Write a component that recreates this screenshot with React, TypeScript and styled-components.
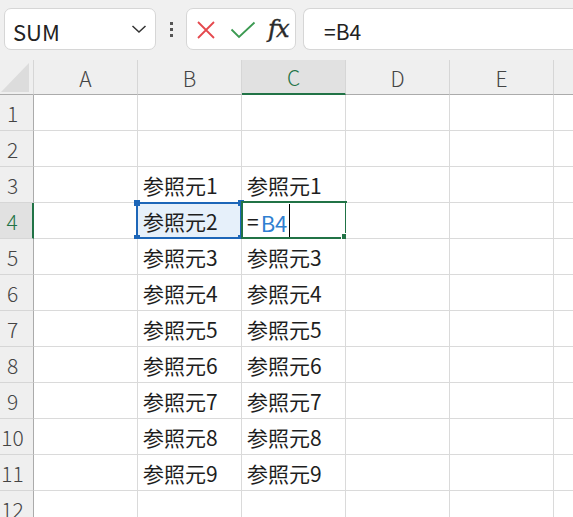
import React from 'react';
import styled, { createGlobalStyle, css } from 'styled-components';

const GlobalStyle = createGlobalStyle`
  html, body {
    margin: 0;
    padding: 0;
    background: #ffffff;
  }
  body {
    font-family: 'Noto Sans CJK JP', 'Noto Sans', sans-serif;
    overflow: hidden;
  }
`;

const COLUMNS = ['A', 'B', 'C', 'D', 'E', 'F'];
const ROWS = Array.from({ length: 12 }, (_, i) => i + 1);
const SELECTED_COL = 'C';
const SELECTED_ROW = 4;

// 参照元1..9 in B3:C11
function cellText(col: string, row: number): string {
  if ((col === 'B' || col === 'C') && row >= 3 && row <= 11) {
    return `参照元${row - 2}`;
  }
  return '';
}

export default function App(): React.ReactElement {
  return (
    <>
      <GlobalStyle />
      <Page>
        <Toolbar>
          <NameBox>
            <NameText>SUM</NameText>
            <svg width="16" height="10" viewBox="0 0 16 10">
              <path d="M1.5 2 L8 8 L14.5 2" fill="none" stroke="#333" strokeWidth="1.5" />
            </svg>
          </NameBox>
          <Grip>
            <Dot />
            <Dot />
            <Dot />
          </Grip>
          <FxGroup>
            <svg width="20" height="20" viewBox="0 0 20 20">
              <path d="M2 2 L18 18 M18 2 L2 18" stroke="#e5484d" strokeWidth="1.8" fill="none" />
            </svg>
            <svg width="26" height="18" viewBox="0 0 26 18">
              <path d="M1.5 8.5 L9 16 L24.5 1.5" stroke="#3c9a52" strokeWidth="1.8" fill="none" />
            </svg>
            <FxLabel>fx</FxLabel>
          </FxGroup>
          <FormulaInput>=B4</FormulaInput>
        </Toolbar>

        <Sheet>
          <Corner>
            <svg width="29" height="29" viewBox="0 0 29 29">
              <polygon points="28,0 28,29 0,29" fill="#dcdcdc" />
            </svg>
          </Corner>
          {COLUMNS.map((c) => (
            <ColHeader key={c} $active={c === SELECTED_COL}>
              {c === 'F' ? '' : c}
            </ColHeader>
          ))}
          {ROWS.map((r) => (
            <React.Fragment key={r}>
              <RowHeader $active={r === SELECTED_ROW}>{r}</RowHeader>
              {COLUMNS.map((c) => {
                if (c === 'B' && r === 4) {
                  return (
                    <Cell key={c} $ref>
                      {cellText(c, r)}
                      <RefFrame>
                        <Handle $pos="tl" />
                        <Handle $pos="tr" />
                        <Handle $pos="bl" />
                        <Handle $pos="br" />
                      </RefFrame>
                    </Cell>
                  );
                }
                if (c === 'C' && r === 4) {
                  return (
                    <Cell key={c}>
                      <Equals>=</Equals>
                      <RefText>B4</RefText>
                      <Caret />
                      <EditFrame>
                        <FillHandle />
                      </EditFrame>
                    </Cell>
                  );
                }
                return <Cell key={c}>{cellText(c, r)}</Cell>;
              })}
            </React.Fragment>
          ))}
        </Sheet>
      </Page>
    </>
  );
}

const Page = styled.div`
  width: 573px;
  height: 517px;
  overflow: hidden;
  display: flex;
  flex-direction: column;
  background: #ffffff;
`;

const Toolbar = styled.div`
  height: 60px;
  flex: none;
  display: flex;
  align-items: flex-start;
  padding: 8px 0 0 4px;
  box-sizing: border-box;
  background: #f0f0f0;
`;

const NameBox = styled.div`
  flex: none;
  width: 152px;
  height: 42px;
  box-sizing: border-box;
  display: flex;
  align-items: center;
  justify-content: space-between;
  padding: 0 8px 0 8px;
  background: #ffffff;
  border: 1px solid #d6d6d6;
  border-radius: 7px;
`;

const NameText = styled.span`
  font-family: 'Noto Sans CJK JP', sans-serif;
  font-size: 22px;
  color: #222;
  line-height: 1;
  padding-top: 4px;
`;

const Grip = styled.div`
  flex: none;
  width: 30px;
  height: 42px;
  display: flex;
  flex-direction: column;
  align-items: center;
  justify-content: center;
  gap: 3px;
`;

const Dot = styled.span`
  width: 3px;
  height: 3px;
  background: #555;
`;

const FxGroup = styled.div`
  flex: none;
  width: 110px;
  height: 42px;
  box-sizing: border-box;
  display: flex;
  align-items: center;
  gap: 14px;
  padding: 2px 0 0 9px;
  background: #ffffff;
  border: 1px solid #d6d6d6;
  border-radius: 7px;
`;

const FxLabel = styled.span`
  font-family: 'DejaVu Serif', 'Liberation Serif', serif;
  font-style: italic;
  font-size: 24px;
  color: #2a2a2a;
  line-height: 1;
  margin-left: -2px;
  margin-top: -2px;
  letter-spacing: -1px;
  -webkit-text-stroke: 0.4px #2a2a2a;
`;

const FormulaInput = styled.div`
  flex: 1;
  height: 42px;
  margin-left: 7px;
  box-sizing: border-box;
  display: flex;
  align-items: center;
  padding: 3px 0 0 20px;
  background: #ffffff;
  border: 1px solid #d6d6d6;
  border-right: none;
  border-radius: 7px 0 0 7px;
  font-family: 'Noto Sans CJK JP', sans-serif;
  font-size: 21px;
  color: #222;
`;

const Sheet = styled.div`
  display: grid;
  grid-template-columns: 34px repeat(6, 104px);
  grid-template-rows: 35px repeat(12, 36px);
`;

const headerBase = css`
  box-sizing: border-box;
  background: #efefef;
  display: flex;
  align-items: center;
  justify-content: center;
  font-family: 'Noto Sans CJK JP', sans-serif;
  font-size: 21px;
  font-weight: 300;
  color: #444;
  line-height: 1;
`;

const Corner = styled.div`
  ${headerBase};
  border-right: 1px solid #d6d6d6;
  border-bottom: 1px solid #ababab;
  align-items: flex-end;
  justify-content: flex-end;
  padding: 0 3px 2px 0;
`;

const ColHeader = styled.div<{ $active?: boolean }>`
  ${headerBase};
  border-right: 1px solid #d6d6d6;
  border-bottom: 1px solid #ababab;
  padding-top: 2px;
  ${(p) =>
    p.$active &&
    css`
      background: #e1e1e1;
      color: #217346;
      border-bottom: 2px solid #217346;
    `}
`;

const RowHeader = styled.div<{ $active?: boolean }>`
  ${headerBase};
  border-right: 1px solid #ababab;
  border-bottom: 1px solid #d6d6d6;
  padding-right: 8px;
  padding-top: 2px;
  ${(p) =>
    p.$active &&
    css`
      background: #e1e1e1;
      color: #217346;
      border-right: 2px solid #217346;
    `}
`;

const Cell = styled.div<{ $ref?: boolean }>`
  position: relative;
  box-sizing: border-box;
  display: flex;
  align-items: center;
  padding: 2px 0 0 5px;
  border-right: 1px solid #dadada;
  border-bottom: 1px solid #dadada;
  background: ${(p) => (p.$ref ? '#e6f0fa' : '#ffffff')};
  font-family: 'Noto Sans CJK JP', sans-serif;
  font-size: 21px;
  color: #1e1e1e;
  line-height: 1;
  white-space: nowrap;
`;

const Equals = styled.span`
  margin-right: 2px;
`;

const RefText = styled.span`
  color: #2f7fd1;
  font-size: 22px;
`;

const Caret = styled.span`
  position: absolute;
  left: 47px;
  top: 1px;
  bottom: 0;
  width: 1px;
  background: #000;
`;

const RefFrame = styled.div`
  position: absolute;
  left: -2px;
  top: -1px;
  right: -1px;
  bottom: -1px;
  border: 2px solid #1d66b8;
  pointer-events: none;
`;

const Handle = styled.span<{ $pos: 'tl' | 'tr' | 'bl' | 'br' }>`
  position: absolute;
  width: 6px;
  height: 6px;
  background: #1d66b8;
  ${(p) => (p.$pos[0] === 't' ? 'top: -4px;' : 'bottom: -4px;')}
  ${(p) => (p.$pos[1] === 'l' ? 'left: -4px;' : 'right: -4px;')}
`;

const EditFrame = styled.div`
  position: absolute;
  left: -1px;
  top: -2px;
  right: -2px;
  bottom: -1px;
  border: 2px solid #217346;
  pointer-events: none;
`;

const FillHandle = styled.span`
  position: absolute;
  right: -3px;
  bottom: -3px;
  width: 6px;
  height: 6px;
  background: #217346;
  border-left: 1px solid #fff;
  border-top: 1px solid #fff;
`;
